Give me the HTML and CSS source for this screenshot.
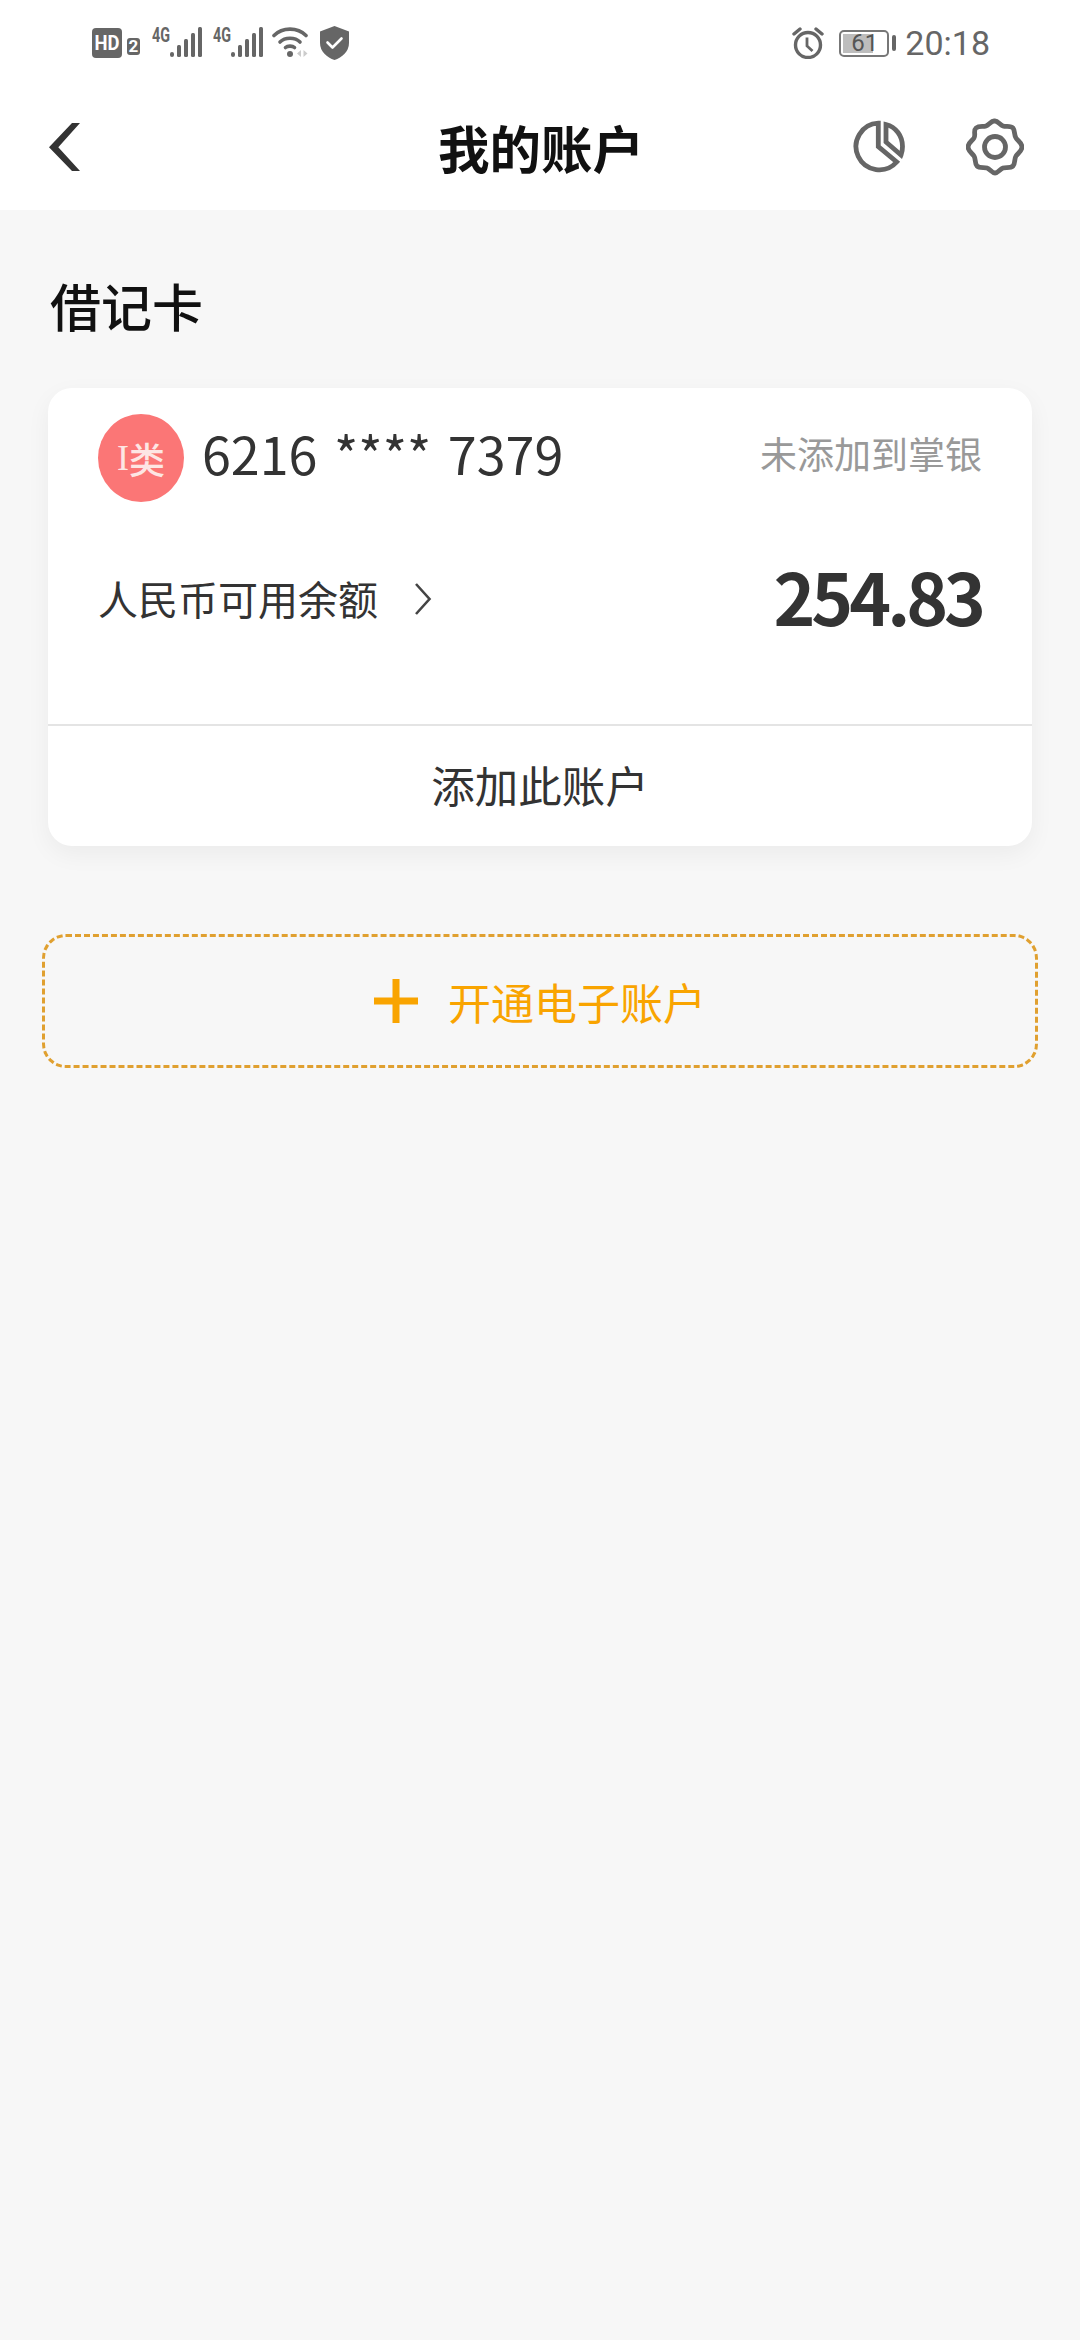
FILE: index.html
```html
<!DOCTYPE html>
<html lang="zh-CN">
<head>
<meta charset="utf-8">
<title>我的账户</title>
<link rel="stylesheet" href="styles.css">
</head>
<body>
<header class="top">
  <div class="status">
    <div class="status-left">
      <svg class="ic-hd" width="48" height="30" viewBox="0 0 48 30">
        <rect x="0" y="0" width="30" height="30" rx="4" fill="#666"/>
        <text x="15" y="22" text-anchor="middle" class="hd-t" textLength="25" lengthAdjust="spacingAndGlyphs">HD</text>
        <rect x="35" y="10" width="13" height="17" rx="3" fill="#666"/>
        <text x="41.5" y="24" text-anchor="middle" class="hd-n">2</text>
      </svg>
      <svg class="ic-sig" width="50" height="38" viewBox="0 -6 50 38">
        <text x="0" y="15.500" class="sig-t" textLength="18" lengthAdjust="spacingAndGlyphs">4G</text>
        <g fill="#666">
          <rect x="18" y="26" width="4" height="5" rx="2"/>
          <rect x="25" y="19" width="4" height="12" rx="1.500"/>
          <rect x="32" y="13" width="4" height="18" rx="1.500"/>
          <rect x="39" y="7" width="4" height="24" rx="1.500"/>
          <rect x="46" y="1" width="4" height="30" rx="1.500"/>
        </g>
      </svg>
      <svg class="ic-sig ic-sig2" width="50" height="38" viewBox="0 -6 50 38">
        <text x="0" y="15.500" class="sig-t" textLength="18" lengthAdjust="spacingAndGlyphs">4G</text>
        <g fill="#666">
          <rect x="18" y="26" width="4" height="5" rx="2"/>
          <rect x="25" y="19" width="4" height="12" rx="1.500"/>
          <rect x="32" y="13" width="4" height="18" rx="1.500"/>
          <rect x="39" y="7" width="4" height="24" rx="1.500"/>
          <rect x="46" y="1" width="4" height="30" rx="1.500"/>
        </g>
      </svg>
      <svg class="ic-wifi" width="38" height="32" viewBox="0 0 38 32">
        <g fill="none" stroke="#666" stroke-width="3.600" stroke-linecap="round">
          <path d="M2 9.500C10.500 1 25.500 1 34 9.500"/>
          <path d="M8 16C13 11 23 11 28 16"/>
          <path d="M13.500 21.500C15.500 19.700 20.500 19.700 22.500 21.500"/>
        </g>
        <circle cx="18" cy="28" r="3" fill="#666"/>
        <path d="M29 24v7l-4-3.500zM31.500 24v7l4-3.500z" fill="#ccc"/>
      </svg>
      <svg class="ic-shield" width="29" height="34" viewBox="0 0 29 34">
        <path d="M14.500 0L29 5.500V17C29 25.500 22 31.500 14.500 34 7 31.500 0 25.500 0 17V5.500z" fill="#666"/>
        <path d="M7.500 16.500l5 5 9-9" fill="none" stroke="#fff" stroke-width="2.600" stroke-linecap="round" stroke-linejoin="round"/>
      </svg>
    </div>
    <div class="status-right">
      <svg class="ic-alarm" width="32" height="32" viewBox="0 0 32 32">
        <circle cx="16" cy="18" r="12.500" fill="none" stroke="#666" stroke-width="3.400"/>
        <path d="M15 10.500v8.500l5.500 5" fill="none" stroke="#666" stroke-width="2.800"/>
        <path d="M2 7l6-5M30 7l-6-5" fill="none" stroke="#666" stroke-width="3.400" stroke-linecap="round"/>
      </svg>
      <div class="battery">
        <div class="cell">
          <div class="cell-fill"></div>
          <span class="cell-n">61</span>
        </div>
        <div class="nub"></div>
      </div>
      <span class="time">20:18</span>
    </div>
  </div>
  <nav class="nav">
    <svg class="back" width="36" height="50" viewBox="0 0 36 50">
      <path d="M24 1H32L10.300 25.300 32 49H24L1 25.300z" fill="#333"/>
    </svg>
    <h1 class="title">我的账户</h1>
    <div class="nav-actions">
      <svg width="54" height="54" viewBox="0 0 54 54">
        <g fill="none" stroke="#666" stroke-width="4.800">
          <path d="M26.300 3.200A23.300 23.300 0 1 0 44.700 42L26.300 26.700z"/>
          <path d="M34 4.500C44 7 50.500 16 50.500 26.500c0 3-.5 6-1.500 8.500L34 22z"/>
        </g>
      </svg>
      <svg width="58" height="58" viewBox="0 0 58 58">
        <path fill="none" stroke="#666" stroke-width="4.800" stroke-linejoin="round" d="M29 3c3 0 5 4 8 5s8-.5 10 2 1 7 3 10 6 5 6 9-4 6-6 9-.500 7.500-3 10-7 1-10 2-5 5-8 5-5-4-8-5-7.500.5-10-2-1-7-3-10-6-5-6-9 4-6 6-9-1-7.500 2-10 7-1 10-2 5-5 8-5z"/>
        <circle cx="29" cy="29" r="10.500" fill="none" stroke="#666" stroke-width="4.800"/>
      </svg>
    </div>
  </nav>
</header>

<main class="content">
  <h2 class="section">借记卡</h2>
  <section class="card">
    <div class="card-body">
      <div class="row-num">
        <div class="acct">
          <span class="badge"><span class="badge-i">I</span>类</span>
          <span class="num">6216 **** 7379</span>
        </div>
        <span class="state">未添加到掌银</span>
      </div>
      <div class="row-bal">
        <div class="bal-label">
          <span>人民币可用余额</span>
          <svg class="chev" width="18" height="34" viewBox="0 0 18 34">
            <path d="M2 2L15.500 17 2 32" fill="none" stroke="#444" stroke-width="2.600"/>
          </svg>
        </div>
        <span class="bal">254.83</span>
      </div>
    </div>
    <div class="card-action">添加此账户</div>
  </section>
  <div class="open">
    <svg width="44" height="44" viewBox="0 0 44 44">
      <path d="M0 22h44M22 0v44" fill="none" stroke="#f9a400" stroke-width="7"/>
    </svg>
    <span>开通电子账户</span>
  </div>
</main>
</body>
</html>
```

FILE: styles.css
```css
* { box-sizing: border-box; }
html, body { margin: 0; padding: 0; }
body {
  width: 1080px;
  height: 2340px;
  overflow: hidden;
  background: #f7f7f7;
  font-family: "Noto Sans CJK SC", "Noto Sans", sans-serif;
  color: #333;
}
.top { background: #fff; height: 210px; }
.status {
  height: 84px;
  padding: 26px 0 0 92px;
  display: flex;
  justify-content: space-between;
  align-items: flex-start;
}
.status-left { display: flex; align-items: flex-start; }
.ic-hd { margin-top: 2px; }
.ic-sig { margin: -6px 0 0 12px; }
.ic-sig2 { margin-left: 11px; }
.ic-wifi { margin-left: 9px; }
.ic-shield { margin-left: 10px; }
.hd-t { font: 700 21px "Roboto", sans-serif; fill: #fff; }
.hd-n { font: 700 17px "Roboto", sans-serif; fill: #fff; }
.sig-t { font: 700 20px "Roboto", sans-serif; fill: #666; }
.status-right { display: flex; align-items: center; padding-right: 90px; height: 32px; margin-top: 1px; }
.battery { display: flex; align-items: center; margin-left: 15px; }
.cell {
  position: relative;
  width: 50px;
  height: 27px;
  border: 2px solid #777;
  border-radius: 5px;
  padding: 2px;
}
.cell-fill { width: 30px; height: 100%; background: #bdbdbd; }
.cell-n {
  position: absolute;
  left: 10px;
  top: -3px;
  font: 400 24px/28px "Roboto", sans-serif;
  color: #555;
}
.nub { width: 4px; height: 16px; background: #666; border-radius: 2px; margin-left: 3px; }
.time { margin-left: 9px; font: 400 34px/32px "Roboto", sans-serif; color: #666; }

.nav {
  height: 126px;
  position: relative;
  display: flex;
  align-items: center;
  justify-content: space-between;
  padding: 0 56px 0 48px;
}
.title {
  position: absolute;
  left: 2px;
  right: 0;
  margin: 0;
  text-align: center;
  font-size: 51.5px;
  font-weight: 700;
  line-height: 60px;
  color: #111;
}
.nav-actions { display: flex; align-items: center; gap: 60px; }

.content { padding: 0 42px; }
.section {
  margin: 60px 0 0 8px;
  font-size: 51px;
  font-weight: 500;
  line-height: 70px;
  color: #111;
}
.card {
  margin: 48px 6px 0;
  background: #fff;
  border-radius: 24px;
  box-shadow: 0 8px 24px rgba(0, 0, 0, .05);
  height: 458px;
  display: flex;
  flex-direction: column;
}
.card-body { flex: 1; padding: 26px 50px 0; border-bottom: 2px solid #e4e4e4; }
.row-num { display: flex; justify-content: space-between; align-items: center; height: 88px; }
.acct { display: flex; align-items: center; gap: 18px; }
.badge {
  width: 86px;
  height: 88px;
  border-radius: 50%;
  background: #fb7676;
  color: #fde6e4;
  display: flex;
  align-items: center;
  justify-content: center;
  font-family: "Liberation Serif", "Noto Sans CJK SC", serif;
  font-size: 36px;
  font-weight: 500;
}
.badge-i { font-family: "Liberation Serif", serif; }
.num { font-size: 52px; line-height: 60px; color: #333; word-spacing: 5px; margin-bottom: 10px; }
.state { font-size: 37px; color: #999; margin-bottom: 10px; }
.row-bal {
  margin-top: 58px;
  display: flex;
  justify-content: space-between;
  align-items: center;
  height: 70px;
}
.bal-label { display: flex; align-items: center; gap: 36px; font-size: 40px; color: #333; margin-top: 6px; }
.chev { margin-top: 2px; }
.bal { font-size: 71px; font-weight: 700; letter-spacing: -4px; color: #333; line-height: 70px; }
.card-action {
  height: 120px;
  padding-bottom: 4px;
  display: flex;
  align-items: center;
  justify-content: center;
  font-size: 43.5px;
  color: #333;
}
.open {
  margin-top: 88px;
  height: 134px;
  border: 3px dashed #e0a030;
  border-radius: 24px;
  display: flex;
  align-items: center;
  justify-content: center;
  gap: 30px;
  font-size: 43px;
  color: #f9a400;
}
```
